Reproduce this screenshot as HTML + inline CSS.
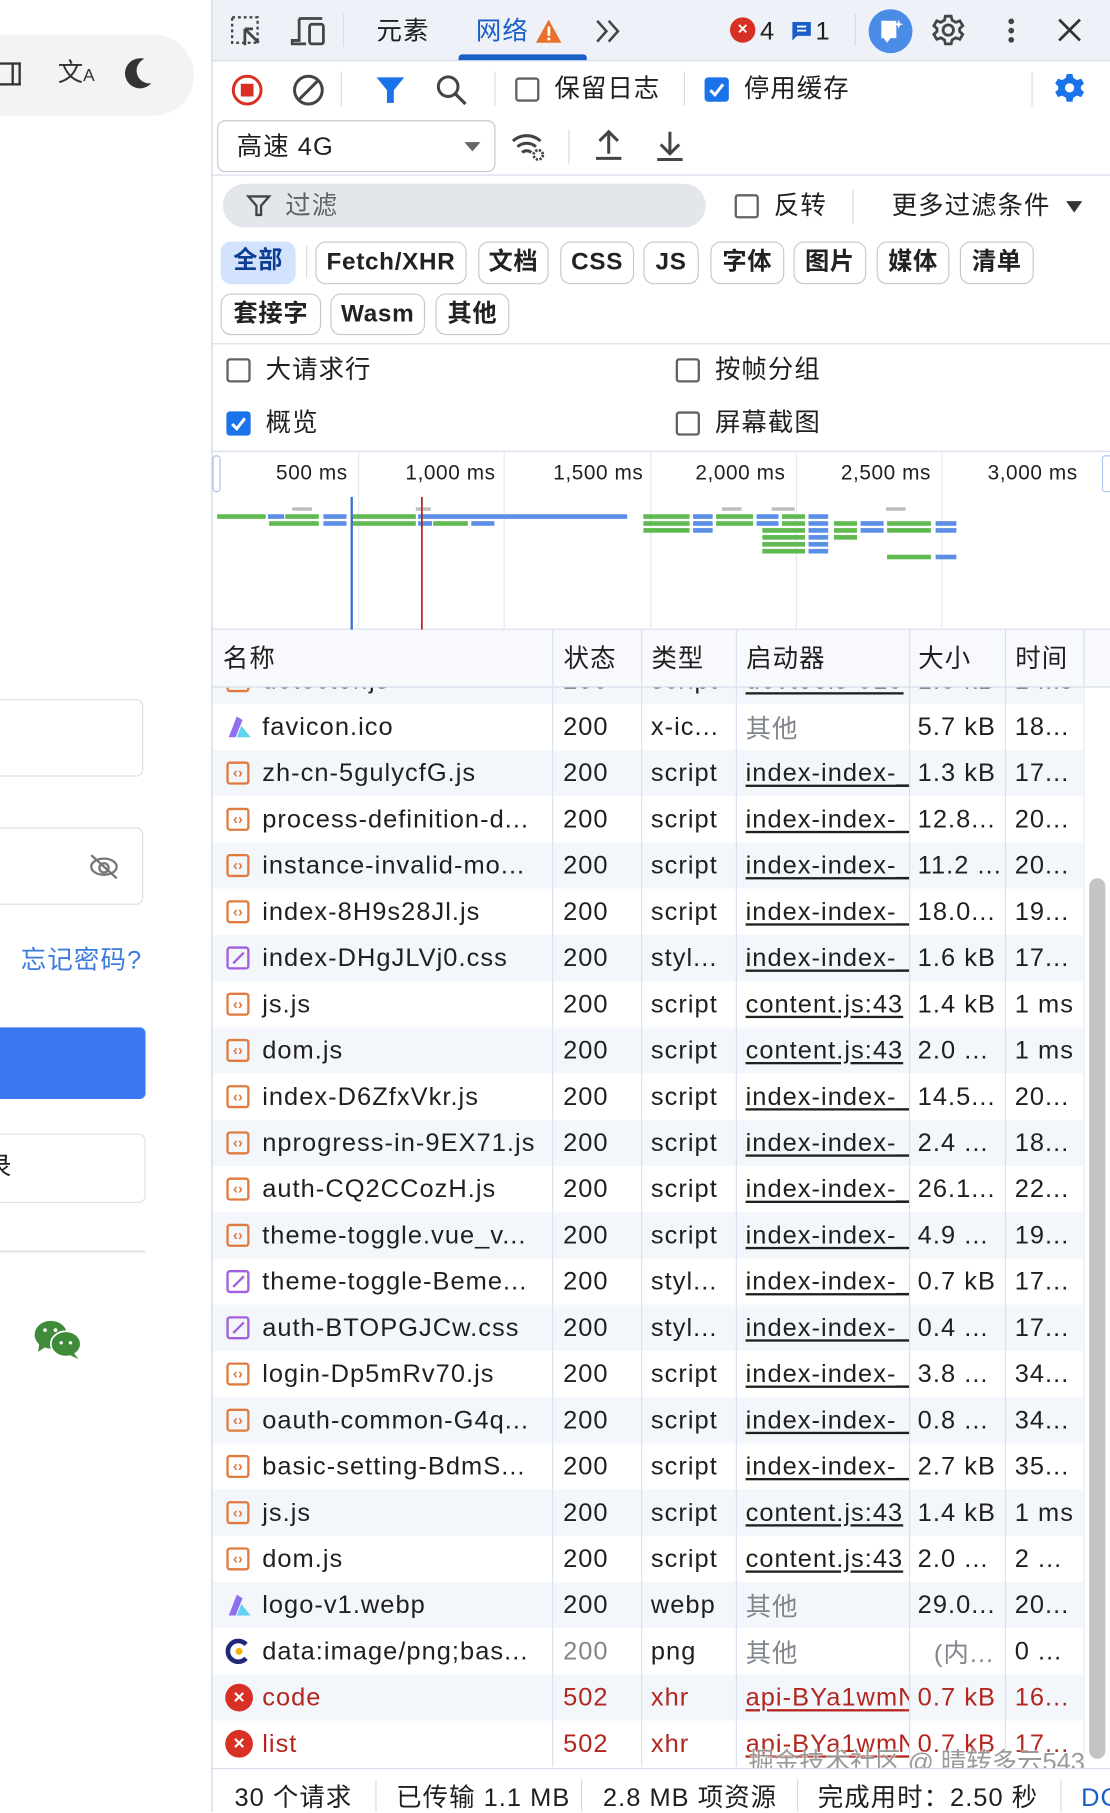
<!DOCTYPE html>
<html><head><meta charset="utf-8">
<style>
html,body{margin:0;padding:0;width:1110px;height:1812px;overflow:hidden;background:#fff}
#w{position:absolute;left:0;top:0;width:961px;height:1568px;transform:scale(1.15505,1.1556);transform-origin:0 0;font-family:"Liberation Sans","Noto Sans CJK SC",sans-serif;color:#1f1f1f;font-size:22px;letter-spacing:0.9px}
.a{position:absolute}
.t{position:absolute;white-space:nowrap;line-height:1}
.cb{position:absolute;width:17px;height:17px;border:2px solid #5f6368;border-radius:3px;box-sizing:content-box}
.cbx{position:absolute;width:21px;height:21px;background:#1a73e8;border-radius:3px}
.vd{position:absolute;width:1px;background:#d3dcea}
.chip{position:absolute;height:35px;border:1px solid #c7c7c7;border-radius:9px;box-sizing:border-box;text-align:center;line-height:34px;font-size:21px;letter-spacing:0.6px;background:#fff;color:#222;font-weight:bold}
table{border-collapse:collapse;table-layout:fixed;position:absolute;left:0;font-size:22px}
td{height:40px;padding:0;white-space:nowrap;overflow:hidden;border-right:1px solid #d6e0f0;vertical-align:middle}
tr:nth-child(even) td{background:#fff}
tr:nth-child(odd) td{background:#f3f6fb}
td.n{padding-left:43px;position:relative;text-overflow:clip}
td.s{padding-left:9px}
td.ty{padding-left:8px}
td.i{padding-left:8px}
td.i u{text-decoration:underline;text-underline-offset:3px}
td.z{padding-left:7px}
td.m{padding-left:8px;border-right:none}
.g{color:#80868b}
.r{color:#b3261e}
.ic{position:absolute;left:12px;top:10px;width:16px;height:16px;border:2px solid #e07a3e;border-radius:3px;box-sizing:content-box;font-size:13px;letter-spacing:0;color:#e07a3e;text-align:center;line-height:15px;font-weight:bold}
.cs{position:absolute;left:12px;top:10px;width:16px;height:16px;border:2px solid #a15fe0;border-radius:3px}
.cs:after{content:"";position:absolute;left:2px;top:7px;width:13px;height:2px;background:#a15fe0;transform:rotate(-45deg)}
.er{position:absolute;left:11px;top:8px;width:24px;height:24px;border-radius:50%;background:#d93025;color:#fff;text-align:center;line-height:24px;font-size:17px;letter-spacing:0;font-weight:bold}
</style></head><body><div id="w">

<!-- left page -->
<div class="a" style="left:-40px;top:30px;width:208px;height:70px;border-radius:35px;background:#f2f3f5"></div>
<div class="a" style="left:0;top:54px;width:18px;height:20px;border:2px solid #333;border-left:none;box-sizing:border-box"></div>
<div class="a" style="left:10px;top:54px;width:2px;height:20px;background:#333"></div>
<div class="t" style="left:50px;top:52px;font-size:22px;color:#333;letter-spacing:0">文<span style="font-size:15px">A</span></div>
<svg class="a" style="left:103px;top:48px" width="30" height="32"><path d="M22 3 A13 13 0 1 0 28 24 A11 11 0 0 1 22 3Z" fill="#333"/></svg>
<div class="a" style="left:-10px;top:605px;width:134px;height:67px;border:1.5px solid #dcdfe6;border-radius:6px;box-sizing:border-box"></div>
<div class="a" style="left:-10px;top:716px;width:134px;height:67px;border:1.5px solid #dcdfe6;border-radius:6px;box-sizing:border-box"></div>
<svg class="a" style="left:75px;top:736px" width="30" height="28"><ellipse cx="15" cy="14" rx="11" ry="7" fill="none" stroke="#777" stroke-width="2"/><circle cx="15" cy="15" r="4" fill="none" stroke="#777" stroke-width="2"/><path d="M4 4 L26 24" stroke="#777" stroke-width="2"/></svg>
<div class="t" style="left:18px;top:820px;font-size:22px;color:#3a7bdc;letter-spacing:1px">忘记密码?</div>
<div class="a" style="left:-10px;top:889px;width:136px;height:62px;background:#3a78f2;border-radius:5px"></div>
<div class="a" style="left:-10px;top:981px;width:136px;height:60px;border:1.5px solid #dcdfe6;border-radius:6px;box-sizing:border-box"></div>
<div class="t" style="left:-12px;top:999px;font-size:22px;color:#222">录</div>
<div class="a" style="left:0;top:1082px;width:126px;height:1.5px;background:#e2e4e8"></div>
<svg class="a" style="left:28px;top:1140px" width="46" height="38"><ellipse cx="16" cy="15" rx="14" ry="12" fill="#3f8b3a"/><path d="M6 23 L5 30 L12 25Z" fill="#3f8b3a"/><ellipse cx="29" cy="23" rx="13" ry="11" fill="#3f8b3a" stroke="#fff" stroke-width="1.5"/><path d="M36 31 L40 36 L33 33Z" fill="#3f8b3a"/><circle cx="11" cy="11" r="1.6" fill="#fff"/><circle cx="20" cy="11" r="1.6" fill="#fff"/><circle cx="25" cy="22" r="1.5" fill="#fff"/><circle cx="33" cy="22" r="1.5" fill="#fff"/></svg>

<!-- devtools -->
<div class="a" style="left:183px;top:0;width:778px;height:1568px;background:#fff;border-left:1px solid #c9d3e3"></div>
<div class="a" style="left:184px;top:0;width:777px;height:52px;background:#eef2f8;border-bottom:1px solid #d3dcea"></div>
<svg class="a" style="left:199px;top:13px" width="30" height="28"><rect x="2" y="2" width="22" height="22" fill="none" stroke="#444" stroke-width="2" stroke-dasharray="2.5 2.5"/><path d="M13 12 L13 26 M13 12 L25 24 M13 12 L20 12" stroke="#444" stroke-width="2.4" fill="none"/></svg>
<svg class="a" style="left:251px;top:13px" width="34" height="28"><path d="M8 3 H28 M8 3 V22 H2 V25 H14" fill="none" stroke="#444" stroke-width="2.4"/><rect x="17" y="8" width="12" height="17" rx="2" fill="none" stroke="#444" stroke-width="2.4"/></svg>
<div class="vd" style="left:297px;top:12px;height:28px"></div>
<div class="t" style="left:326px;top:16px">元素</div>
<div class="t" style="left:412px;top:16px;color:#1a5fc8">网络</div>
<svg class="a" style="left:463px;top:16px" width="24" height="22"><path d="M12 1 L23 21 H1Z" fill="#e8702a"/><rect x="11" y="7" width="2.4" height="8" fill="#fff"/><rect x="11" y="16.5" width="2.4" height="2.4" fill="#fff"/></svg>
<div class="a" style="left:397px;top:47px;width:111px;height:5px;background:#1a5fc8;border-radius:3px 3px 0 0"></div>
<svg class="a" style="left:514px;top:16px" width="26" height="22"><path d="M3 2 L11 11 L3 20 M13 2 L21 11 L13 20" stroke="#444" stroke-width="2.2" fill="none"/></svg>
<div class="a" style="left:632px;top:15px;width:22px;height:22px;border-radius:50%;background:#d93025;color:#fff;font-size:15px;text-align:center;line-height:22px;font-weight:bold;letter-spacing:0">×</div>
<div class="t" style="left:658px;top:16px">4</div>
<svg class="a" style="left:684px;top:17px" width="20" height="20"><path d="M2 2 H18 V14 H6 L2 18Z" fill="#1a5fc8"/><path d="M6 6 H14 M6 9.5 H14" stroke="#fff" stroke-width="1.6"/></svg>
<div class="t" style="left:706px;top:16px">1</div>
<div class="vd" style="left:740px;top:12px;height:28px"></div>
<div class="a" style="left:752px;top:8px;width:38px;height:38px;border-radius:50%;background:#4a8be6"></div>
<svg class="a" style="left:760px;top:15px" width="24" height="26"><path d="M3 3 H16 V18 H11 L8 22 L5 18 H3Z" fill="#fff"/><path d="M18 2 L19 5 L22 6 L19 7 L18 10 L17 7 L14 6 L17 5Z" fill="#fff"/></svg>
<svg class="a" style="left:806px;top:11px" width="30" height="30"><g fill="none" stroke="#444" stroke-width="2.4"><circle cx="15" cy="15" r="4.5"/><path d="M12.5 3 H17.5 L18.3 6.5 L21.5 8.3 L25 7 L27.5 11.3 L24.8 13.7 V16.3 L27.5 18.7 L25 23 L21.5 21.7 L18.3 23.5 L17.5 27 H12.5 L11.7 23.5 L8.5 21.7 L5 23 L2.5 18.7 L5.2 16.3 V13.7 L2.5 11.3 L5 7 L8.5 8.3 L11.7 6.5Z"/></g></svg>
<div class="a" style="left:873px;top:16px;width:5px;height:5px;border-radius:50%;background:#444;box-shadow:0 8px 0 #444,0 16px 0 #444"></div>
<svg class="a" style="left:915px;top:15px" width="22" height="22"><path d="M2 2 L20 20 M20 2 L2 20" stroke="#333" stroke-width="2.4"/></svg>

<!-- row 2 -->
<svg class="a" style="left:199px;top:63px" width="30" height="30"><circle cx="15" cy="15" r="12" fill="none" stroke="#d93025" stroke-width="2.6"/><rect x="9.5" y="9.5" width="11" height="11" fill="#d93025"/></svg>
<svg class="a" style="left:252px;top:63px" width="30" height="30"><circle cx="15" cy="15" r="12" fill="none" stroke="#444" stroke-width="2.6"/><path d="M7 23 L23 7" stroke="#444" stroke-width="2.6"/></svg>
<div class="vd" style="left:295px;top:62px;height:30px"></div>
<svg class="a" style="left:325px;top:65px" width="26" height="26"><path d="M1 2 H25 L16 13 V24 H10 V13Z" fill="#1a73e8"/></svg>
<svg class="a" style="left:376px;top:63px" width="30" height="30"><circle cx="12" cy="12" r="8.5" fill="none" stroke="#444" stroke-width="2.6"/><path d="M18 18 L27 27" stroke="#444" stroke-width="2.8"/></svg>
<div class="vd" style="left:428px;top:62px;height:30px"></div>
<div class="cb" style="left:446px;top:67px"></div>
<div class="t" style="left:480px;top:66px">保留日志</div>
<div class="vd" style="left:592px;top:62px;height:30px"></div>
<div class="cbx" style="left:610px;top:67px"></div><svg class="a" style="left:610px;top:67px" width="21" height="21"><path d="M5 11 L9 15 L16 6" stroke="#fff" stroke-width="2.6" fill="none"/></svg>
<div class="t" style="left:644px;top:66px">停用缓存</div>
<div class="vd" style="left:893px;top:62px;height:30px"></div>
<svg class="a" style="left:911px;top:62px" width="30" height="30"><path d="M12.5 2 H17.5 L18.3 5.5 L21.5 7.3 L25 6 L27.5 10.3 L24.8 12.7 V15.3 L27.5 17.7 L25 22 L21.5 20.7 L18.3 22.5 L17.5 26 H12.5 L11.7 22.5 L8.5 20.7 L5 22 L2.5 17.7 L5.2 15.3 V12.7 L2.5 10.3 L5 6 L8.5 7.3 L11.7 5.5Z" fill="#1a73e8"/><circle cx="15" cy="14" r="4" fill="#fff"/></svg>

<!-- row 3 -->
<div class="a" style="left:188px;top:104px;width:241px;height:45px;border:1.5px solid #c7c7c7;border-radius:7px;box-sizing:border-box"></div>
<div class="t" style="left:205px;top:116px">高速 4G</div>
<svg class="a" style="left:401px;top:122px" width="16" height="10"><path d="M1 1 H15 L8 9Z" fill="#666"/></svg>
<svg class="a" style="left:441px;top:112px" width="34" height="30"><path d="M3 10 A18 18 0 0 1 27 10 M7 15 A12 12 0 0 1 23 15 M11 20 A6 6 0 0 1 19 20" stroke="#444" stroke-width="2.6" fill="none"/><circle cx="25" cy="22" r="4" fill="none" stroke="#444" stroke-width="2.4" stroke-dasharray="2 1.2"/></svg>
<div class="vd" style="left:492px;top:112px;height:30px"></div>
<svg class="a" style="left:513px;top:111px" width="28" height="30"><path d="M14 22 V4 M6 11 L14 3 L22 11 M3 26 H25" stroke="#444" stroke-width="2.6" fill="none"/></svg>
<svg class="a" style="left:566px;top:111px" width="28" height="30"><path d="M14 3 V21 M6 14 L14 22 L22 14 M3 27 H25" stroke="#444" stroke-width="2.6" fill="none"/></svg>
<div class="a" style="left:184px;top:151px;width:777px;height:1px;background:#d3dcea"></div>

<!-- filter row -->
<div class="a" style="left:193px;top:159px;width:418px;height:38px;border-radius:19px;background:#e3e6ea"></div>
<svg class="a" style="left:213px;top:168px" width="22" height="20"><path d="M2 2 H20 L13 10 V18 H9 V10Z" fill="none" stroke="#444" stroke-width="2"/></svg>
<div class="t" style="left:247px;top:167px;color:#5f6368">过滤</div>
<div class="cb" style="left:636px;top:168px"></div>
<div class="t" style="left:670px;top:167px">反转</div>
<div class="vd" style="left:738px;top:164px;height:30px"></div>
<div class="t" style="left:772px;top:167px">更多过滤条件</div>
<svg class="a" style="left:922px;top:173px" width="16" height="12"><path d="M1 1 H15 L8 11Z" fill="#333"/></svg>

<!-- chips -->
<div class="chip" style="left:191px;top:209px;width:65px;height:37px;border:none;background:#d3e3fd;color:#0b3d91">全部</div>
<div class="vd" style="left:265px;top:213px;height:28px"></div>
<div class="chip" style="left:273px;top:209px;width:131px;height:37px">Fetch/XHR</div>
<div class="chip" style="left:414px;top:209px;width:61px;height:37px">文档</div>
<div class="chip" style="left:485px;top:209px;width:64px;height:37px">CSS</div>
<div class="chip" style="left:557px;top:209px;width:48px;height:37px">JS</div>
<div class="chip" style="left:615px;top:209px;width:64px;height:37px">字体</div>
<div class="chip" style="left:687px;top:209px;width:63px;height:37px">图片</div>
<div class="chip" style="left:759px;top:209px;width:63px;height:37px">媒体</div>
<div class="chip" style="left:831px;top:209px;width:64px;height:37px">清单</div>
<div class="chip" style="left:191px;top:254px;width:87px;height:36px">套接字</div>
<div class="chip" style="left:286px;top:254px;width:82px;height:36px">Wasm</div>
<div class="chip" style="left:377px;top:254px;width:64px;height:36px">其他</div>
<div class="a" style="left:184px;top:297px;width:777px;height:1px;background:#d3dcea"></div>

<div class="cb" style="left:196px;top:310px"></div><div class="t" style="left:230px;top:309px">大请求行</div>
<div class="cb" style="left:585px;top:310px"></div><div class="t" style="left:619px;top:309px">按帧分组</div>
<div class="cbx" style="left:196px;top:356px"></div><svg class="a" style="left:196px;top:356px" width="21" height="21"><path d="M5 11 L9 15 L16 6" stroke="#fff" stroke-width="2.6" fill="none"/></svg>
<div class="t" style="left:230px;top:355px">概览</div>
<div class="cb" style="left:585px;top:356px"></div><div class="t" style="left:619px;top:355px">屏幕截图</div>

<!-- overview -->
<div class="a" style="left:184px;top:390px;width:777px;height:1px;background:#d3dcea"></div>
<div class="a" style="left:184px;top:544px;width:777px;height:1px;background:#d3dcea"></div>
<div class="a" style="left:184px;top:394px;width:5px;height:30px;border:1px solid #aac4ee;border-radius:3px;background:#fff"></div>
<div class="a" style="left:954px;top:394px;width:8px;height:30px;border:1px solid #aac4ee;border-radius:3px;background:#fff"></div>
<svg class="a" style="left:0;top:390px" width="961" height="155" viewBox="0 390 961 155">
<g fill="#e4e9f1"><rect x="310" y="390" width="1" height="155"/><rect x="436" y="390" width="1" height="155"/><rect x="563" y="390" width="1" height="155"/><rect x="689" y="390" width="1" height="155"/><rect x="815" y="390" width="1" height="155"/></g>
<g fill="#bdbdbd"><rect x="253" y="439" width="17" height="3"/><rect x="360" y="439" width="13" height="3"/><rect x="625" y="439" width="17" height="3"/><rect x="668" y="439" width="20" height="3"/><rect x="767" y="439" width="17" height="3"/></g>
<g fill="#5fb94f">
<rect x="188" y="445" width="42" height="4"/><rect x="247" y="445" width="29" height="4"/><rect x="305" y="445" width="55" height="4"/>
<rect x="233" y="451" width="43" height="4"/><rect x="305" y="451" width="55" height="4"/><rect x="375" y="451" width="30" height="4"/>
<rect x="557" y="445" width="40" height="4"/><rect x="620" y="445" width="32" height="4"/><rect x="677" y="445" width="20" height="4"/>
<rect x="557" y="451" width="40" height="4"/><rect x="620" y="451" width="32" height="4"/><rect x="677" y="451" width="20" height="4"/><rect x="722" y="451" width="20" height="4"/><rect x="768" y="451" width="38" height="4"/>
<rect x="557" y="457" width="40" height="4"/><rect x="660" y="457" width="37" height="4"/><rect x="722" y="457" width="20" height="4"/><rect x="768" y="457" width="38" height="4"/>
<rect x="660" y="463" width="37" height="4"/><rect x="660" y="469" width="37" height="4"/><rect x="722" y="463" width="20" height="4"/>
<rect x="660" y="475" width="37" height="4"/><rect x="768" y="480" width="38" height="4"/></g>
<g fill="#5b8fe6">
<rect x="232" y="445" width="14" height="4"/><rect x="280" y="445" width="20" height="4"/><rect x="362" y="445" width="181" height="4"/>
<rect x="280" y="451" width="20" height="4"/><rect x="362" y="451" width="12" height="4"/><rect x="408" y="451" width="20" height="4"/>
<rect x="600" y="445" width="17" height="4"/><rect x="655" y="445" width="19" height="4"/><rect x="700" y="445" width="17" height="4"/>
<rect x="600" y="451" width="17" height="4"/><rect x="655" y="451" width="19" height="4"/><rect x="700" y="451" width="17" height="4"/><rect x="745" y="451" width="20" height="4"/><rect x="810" y="451" width="18" height="4"/>
<rect x="600" y="457" width="17" height="4"/><rect x="700" y="457" width="17" height="4"/><rect x="745" y="457" width="20" height="4"/><rect x="810" y="457" width="18" height="4"/>
<rect x="700" y="463" width="17" height="4"/><rect x="700" y="469" width="17" height="4"/><rect x="700" y="475" width="17" height="4"/><rect x="810" y="480" width="18" height="4"/></g>
<rect x="303.5" y="430" width="2" height="115" fill="#3b6fd4"/><rect x="364.5" y="430" width="1.5" height="115" fill="#b3261e"/>
</svg>
<div class="t" style="left:239px;top:400px;font-size:18px;letter-spacing:0.5px">500 ms</div>
<div class="t" style="left:351px;top:400px;font-size:18px;letter-spacing:0.5px">1,000 ms</div>
<div class="t" style="left:479px;top:400px;font-size:18px;letter-spacing:0.5px">1,500 ms</div>
<div class="t" style="left:602px;top:400px;font-size:18px;letter-spacing:0.5px">2,000 ms</div>
<div class="t" style="left:728px;top:400px;font-size:18px;letter-spacing:0.5px">2,500 ms</div>
<div class="t" style="left:855px;top:400px;font-size:18px;letter-spacing:0.5px">3,000 ms</div>

<!-- table -->
<div class="a" style="left:184px;top:595px;width:777px;height:935px;overflow:hidden">
<table style="top:-26px;width:754px">
<colgroup><col style="width:294px"><col style="width:77px"><col style="width:82px"><col style="width:150px"><col style="width:83px"><col style="width:68px"></colgroup>
<tr><td class="n"><span class="ic">‹›</span>detector.js</td><td class="s">200</td><td class="ty">script</td><td class="i"><u>devtools-915</u></td><td class="z">1.5 kB</td><td class="m">1 ms</td></tr>
<tr><td class="n"><svg class="a" style="left:12px;top:10px" width="22" height="20"><path d="M9 1 L14 4 L8 19 H2Z" fill="#8f6ff0"/><path d="M13 9 L21 19 H9Z" fill="#5fd3f0"/></svg>favicon.ico</td><td class="s">200</td><td class="ty">x-ic...</td><td class="i g">其他</td><td class="z">5.7 kB</td><td class="m">18...</td></tr>
<tr><td class="n"><span class="ic">‹›</span>zh-cn-5gulycfG.js</td><td class="s">200</td><td class="ty">script</td><td class="i"><u>index-index-_</u></td><td class="z">1.3 kB</td><td class="m">17...</td></tr>
<tr><td class="n"><span class="ic">‹›</span>process-definition-d...</td><td class="s">200</td><td class="ty">script</td><td class="i"><u>index-index-_</u></td><td class="z">12.8...</td><td class="m">20...</td></tr>
<tr><td class="n"><span class="ic">‹›</span>instance-invalid-mo...</td><td class="s">200</td><td class="ty">script</td><td class="i"><u>index-index-_</u></td><td class="z">11.2 ...</td><td class="m">20...</td></tr>
<tr><td class="n"><span class="ic">‹›</span>index-8H9s28Jl.js</td><td class="s">200</td><td class="ty">script</td><td class="i"><u>index-index-_</u></td><td class="z">18.0...</td><td class="m">19...</td></tr>
<tr><td class="n"><span class="cs"></span>index-DHgJLVj0.css</td><td class="s">200</td><td class="ty">styl...</td><td class="i"><u>index-index-_</u></td><td class="z">1.6 kB</td><td class="m">17...</td></tr>
<tr><td class="n"><span class="ic">‹›</span>js.js</td><td class="s">200</td><td class="ty">script</td><td class="i"><u>content.js:43</u></td><td class="z">1.4 kB</td><td class="m">1 ms</td></tr>
<tr><td class="n"><span class="ic">‹›</span>dom.js</td><td class="s">200</td><td class="ty">script</td><td class="i"><u>content.js:43</u></td><td class="z">2.0 ...</td><td class="m">1 ms</td></tr>
<tr><td class="n"><span class="ic">‹›</span>index-D6ZfxVkr.js</td><td class="s">200</td><td class="ty">script</td><td class="i"><u>index-index-_</u></td><td class="z">14.5...</td><td class="m">20...</td></tr>
<tr><td class="n"><span class="ic">‹›</span>nprogress-in-9EX71.js</td><td class="s">200</td><td class="ty">script</td><td class="i"><u>index-index-_</u></td><td class="z">2.4 ...</td><td class="m">18...</td></tr>
<tr><td class="n"><span class="ic">‹›</span>auth-CQ2CCozH.js</td><td class="s">200</td><td class="ty">script</td><td class="i"><u>index-index-_</u></td><td class="z">26.1...</td><td class="m">22...</td></tr>
<tr><td class="n"><span class="ic">‹›</span>theme-toggle.vue_v...</td><td class="s">200</td><td class="ty">script</td><td class="i"><u>index-index-_</u></td><td class="z">4.9 ...</td><td class="m">19...</td></tr>
<tr><td class="n"><span class="cs"></span>theme-toggle-Beme...</td><td class="s">200</td><td class="ty">styl...</td><td class="i"><u>index-index-_</u></td><td class="z">0.7 kB</td><td class="m">17...</td></tr>
<tr><td class="n"><span class="cs"></span>auth-BTOPGJCw.css</td><td class="s">200</td><td class="ty">styl...</td><td class="i"><u>index-index-_</u></td><td class="z">0.4 ...</td><td class="m">17...</td></tr>
<tr><td class="n"><span class="ic">‹›</span>login-Dp5mRv70.js</td><td class="s">200</td><td class="ty">script</td><td class="i"><u>index-index-_</u></td><td class="z">3.8 ...</td><td class="m">34...</td></tr>
<tr><td class="n"><span class="ic">‹›</span>oauth-common-G4q...</td><td class="s">200</td><td class="ty">script</td><td class="i"><u>index-index-_</u></td><td class="z">0.8 ...</td><td class="m">34...</td></tr>
<tr><td class="n"><span class="ic">‹›</span>basic-setting-BdmS...</td><td class="s">200</td><td class="ty">script</td><td class="i"><u>index-index-_</u></td><td class="z">2.7 kB</td><td class="m">35...</td></tr>
<tr><td class="n"><span class="ic">‹›</span>js.js</td><td class="s">200</td><td class="ty">script</td><td class="i"><u>content.js:43</u></td><td class="z">1.4 kB</td><td class="m">1 ms</td></tr>
<tr><td class="n"><span class="ic">‹›</span>dom.js</td><td class="s">200</td><td class="ty">script</td><td class="i"><u>content.js:43</u></td><td class="z">2.0 ...</td><td class="m">2 ...</td></tr>
<tr><td class="n"><svg class="a" style="left:12px;top:10px" width="22" height="20"><path d="M9 1 L14 4 L8 19 H2Z" fill="#8f6ff0"/><path d="M13 9 L21 19 H9Z" fill="#5fd3f0"/></svg>logo-v1.webp</td><td class="s">200</td><td class="ty">webp</td><td class="i g">其他</td><td class="z">29.0...</td><td class="m">20...</td></tr>
<tr><td class="n"><svg class="a" style="left:11px;top:9px" width="22" height="22"><path d="M18 5 A9 9 0 1 0 18 17" stroke="#1e2a78" stroke-width="4" fill="none"/><circle cx="12" cy="11" r="3" fill="#f2b400"/></svg>data:image/png;bas...</td><td class="s g">200</td><td class="ty">png</td><td class="i g">其他</td><td class="z g">&nbsp;&nbsp;(内...</td><td class="m">0 ...</td></tr>
<tr><td class="n r"><span class="er">×</span>code</td><td class="s r">502</td><td class="ty r">xhr</td><td class="i r"><u>api-BYa1wmN</u></td><td class="z r">0.7 kB</td><td class="m r">16...</td></tr>
<tr><td class="n r"><span class="er">×</span>list</td><td class="s r">502</td><td class="ty r">xhr</td><td class="i r"><u>api-BYa1wmN</u></td><td class="z r">0.7 kB</td><td class="m r">17...</td></tr>
</table>
</div>
<!-- header -->
<div class="a" style="left:184px;top:545px;width:777px;height:50px;background:#f7f9fc;border-bottom:1px solid #d3dcea;box-sizing:border-box"></div>
<div class="vd" style="left:478px;top:545px;height:50px;background:#d6e0f0"></div>
<div class="vd" style="left:555px;top:545px;height:50px;background:#d6e0f0"></div>
<div class="vd" style="left:637px;top:545px;height:50px;background:#d6e0f0"></div>
<div class="vd" style="left:787px;top:545px;height:50px;background:#d6e0f0"></div>
<div class="vd" style="left:870px;top:545px;height:50px;background:#d6e0f0"></div>
<div class="vd" style="left:938px;top:545px;height:50px;background:#d6e0f0"></div>
<div class="t" style="left:193px;top:559px">名称</div>
<div class="t" style="left:488px;top:559px">状态</div>
<div class="t" style="left:564px;top:559px">类型</div>
<div class="t" style="left:646px;top:559px">启动器</div>
<div class="t" style="left:795px;top:559px">大小</div>
<div class="t" style="left:879px;top:559px">时间</div>
<!-- scrollbar -->
<div class="a" style="left:938px;top:595px;width:23px;height:935px;background:#fff;border-left:1px solid #e6ebf3"></div>
<div class="a" style="left:943px;top:760px;width:14px;height:762px;border-radius:7px;background:#c4c4c4"></div>
<!-- watermark -->
<div class="t" style="left:648px;top:1514px;font-size:22px;letter-spacing:0;color:rgba(120,120,120,0.75);text-shadow:0 0 2px #fff,0 0 2px #fff">掘金技术社区 @ 晴转多云543</div>
<!-- footer -->
<div class="a" style="left:184px;top:1530px;width:777px;height:38px;background:#fff;border-top:1px solid #d3dcea"></div>
<div class="t" style="left:203px;top:1545px">30 个请求</div>
<div class="vd" style="left:325px;top:1540px;height:28px"></div>
<div class="t" style="left:343px;top:1545px">已传输 1.1 MB</div>
<div class="vd" style="left:503px;top:1540px;height:28px"></div>
<div class="t" style="left:522px;top:1545px">2.8 MB 项资源</div>
<div class="vd" style="left:690px;top:1540px;height:28px"></div>
<div class="t" style="left:708px;top:1545px">完成用时：2.50 秒</div>
<div class="vd" style="left:918px;top:1540px;height:28px"></div>
<div class="t" style="left:936px;top:1545px;color:#1a5fc8">DC</div>
</div></body></html>
